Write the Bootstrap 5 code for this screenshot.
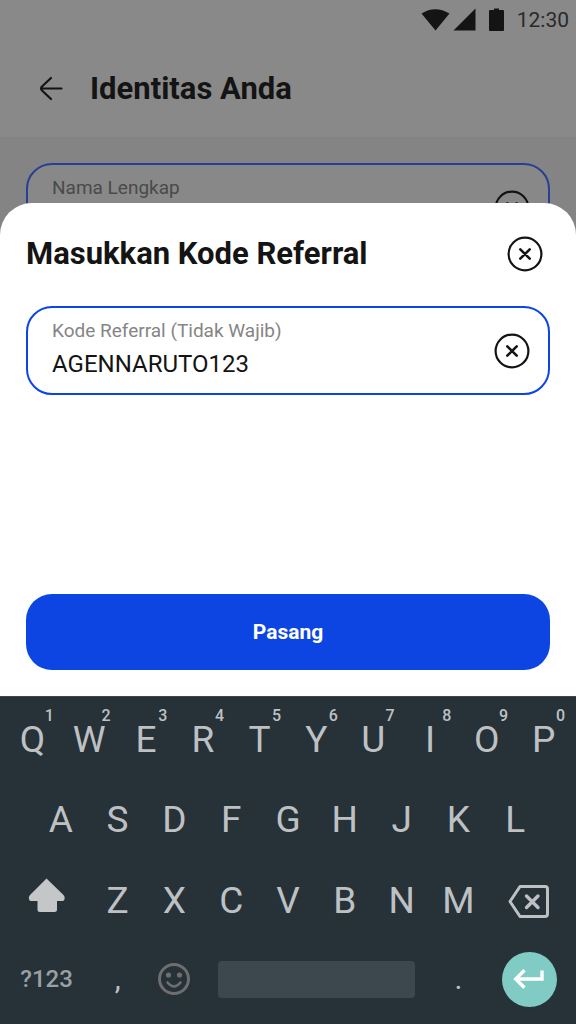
<!DOCTYPE html>
<html lang="id">
<head>
<meta charset="utf-8">
<meta name="viewport" content="width=device-width, initial-scale=1">
<title>Masukkan Kode Referral</title>
<link href="https://cdn.jsdelivr.net/npm/bootstrap@5.3.0/dist/css/bootstrap.min.css" rel="stylesheet">
<style>
  :root { --ink: #141414; --blue: #0d45e3; --key: #bec1c3; }
  body { font-family: Roboto, "Liberation Sans", sans-serif; color: var(--ink); background: #263138; }
  button { color: inherit; }
  svg { display: block; }

  /* Dimmed page behind the sheet */
  .underlay { flex: 1 1 0; min-height: 0; background: #848484; margin-bottom: -32px; }
  .underlay-body { padding: 26px; }
  .top-area { background: #898989; }
  .status-bar { height: 40px; padding-right: 7px; gap: 13px; font-size: 21px; line-height: 40px; color: #2a2a2a; }
  .app-bar { height: 97px; padding-left: 38px; gap: 26px; }
  .title-text { font-size: 31px; line-height: 36px; font-weight: 700; }

  /* Rounded text field with a floating label and a clear button */
  .entry { border: 2px solid var(--blue); border-radius: 26px; padding: 10px 18px 9px 24px; }
  .entry label { font-size: 19px; line-height: 26px; color: #858585; }
  .entry input { font-size: 24px; line-height: 40px; height: 40px; padding: 0; color: var(--ink); outline: 0; }
  .entry-dim { border-color: #284094; background: #888; }
  .entry-dim label { color: #4a4a4a; }
  .plain-btn { border: 0; background: none; padding: 0; }

  .sheet { background: #fff; border-radius: 32px 32px 0 0; padding: 33px 26px 26px; }
  .sheet-head { padding-right: 7px; margin-bottom: 34px; }
  .sheet-gap { height: 199px; }
  .btn-apply { --bs-btn-bg: var(--blue); --bs-btn-color: #fff; --bs-btn-hover-bg: #0b3cc6; --bs-btn-hover-color: #fff;
    border: 0; border-radius: 26px; font-size: 21px; line-height: 28px; font-weight: 700; padding: 24px; }

  /* Keyboard: twenty half-key columns */
  .keyboard { display: grid; grid-template-columns: repeat(20, minmax(0, 1fr)); grid-template-rows: 80px 80px 82px 74px;
    padding: 4px 4px 8px; box-shadow: inset 0 1px #3c474d; background: #263138; color: var(--key); }
  .key { grid-column: span 2; border: 0; background: none; padding: 0; color: inherit; font-size: 37px; line-height: 40px;
    display: flex; align-items: center; justify-content: center; position: relative; }
  .key-wide { grid-column: span 3; }
  .key-first { grid-column: 2 / span 2; }
  .key-space { grid-column: span 8; }
  .key-space span { flex: 1; height: 37px; margin: 0 15px; border-radius: 4px; background: #3d484e; }
  .key-mode { font-size: 24px; font-weight: 500; color: #9aa0a4; }
  .key-point { font-size: 30px; }
  .key sup { position: absolute; top: 8px; right: 7px; font-size: 16px; line-height: 16px; font-weight: 500; }
  .key-enter span { width: 55px; height: 55px; border-radius: 50%; background: #80cbc4;
    display: flex; align-items: center; justify-content: center; }
</style>
</head>
<body>
<div class="d-flex flex-column min-vh-100">

  <div class="underlay overflow-hidden">
    <div class="top-area">
      <div class="status-bar d-flex align-items-center justify-content-end">
        <svg width="55" height="24" viewBox="0 0 55 24" fill="#141414" aria-hidden="true">
          <path d="M.5 5.500Q14 -3 28.500 5.500L14.500 22.500Z"/>
          <path d="M54.500 .5V22.500H32.500Z"/>
        </svg>
        <svg width="15" height="24" viewBox="0 0 15 24" fill="#141414" aria-hidden="true">
          <path d="M5 .5h5v1.500h4a1 1 0 0 1 1 1v19a1 1 0 0 1-1 1H1a1 1 0 0 1-1-1V3a1 1 0 0 1 1-1H5z"/>
        </svg>
        <span>12:30</span>
      </div>
      <div class="app-bar d-flex align-items-center">
        <button class="plain-btn" type="button" aria-label="Kembali">
          <svg width="26" height="26" viewBox="0 0 26 26" fill="none" stroke="#141414" stroke-width="2.200" stroke-linecap="round" stroke-linejoin="round"><path d="M23.500 12.500H3M13 2L4 10.500Q2.200 12.500 4 14.500L13 23"/></svg>
        </button>
        <h1 class="title-text m-0">Identitas Anda</h1>
      </div>
    </div>
    <div class="underlay-body">
      <div class="entry entry-dim d-flex align-items-center">
        <div class="flex-grow-1">
          <label class="d-block" for="fullName">Nama Lengkap</label>
          <input class="form-control-plaintext" id="fullName" type="text">
        </div>
        <button class="plain-btn" type="button" aria-label="Hapus nama">
          <svg width="36" height="36" viewBox="0 0 36 36" fill="none" stroke="#141414" stroke-width="2.200" stroke-linecap="round"><circle cx="18" cy="18" r="16.400"/><path d="M13.300 13.300l9.400 9.400M22.700 13.300l-9.400 9.400" stroke-width="2.600"/></svg>
        </button>
      </div>
    </div>
  </div>

  <main class="sheet position-relative">
    <div class="sheet-head d-flex align-items-center justify-content-between">
      <h2 class="title-text m-0">Masukkan Kode Referral</h2>
      <button class="plain-btn" type="button" aria-label="Tutup">
        <svg width="36" height="36" viewBox="0 0 36 36" fill="none" stroke="#141414" stroke-width="2.200" stroke-linecap="round"><circle cx="18" cy="18" r="16.400"/><path d="M13.300 13.300l9.400 9.400M22.700 13.300l-9.400 9.400" stroke-width="2.600"/></svg>
      </button>
    </div>
    <form>
      <div class="entry d-flex align-items-center">
        <div class="flex-grow-1">
          <label class="d-block" for="referral">Kode Referral (Tidak Wajib)</label>
          <input class="form-control-plaintext" id="referral" type="text" value="AGENNARUTO123">
        </div>
        <button class="plain-btn" type="button" aria-label="Hapus kode">
          <svg width="36" height="36" viewBox="0 0 36 36" fill="none" stroke="#141414" stroke-width="2.200" stroke-linecap="round"><circle cx="18" cy="18" r="16.400"/><path d="M13.300 13.300l9.400 9.400M22.700 13.300l-9.400 9.400" stroke-width="2.600"/></svg>
        </button>
      </div>
      <div class="sheet-gap"></div>
      <button class="btn btn-apply w-100" type="submit">Pasang</button>
    </form>
  </main>

  <div class="keyboard">
    <button class="key" type="button">Q<sup>1</sup></button>
    <button class="key" type="button">W<sup>2</sup></button>
    <button class="key" type="button">E<sup>3</sup></button>
    <button class="key" type="button">R<sup>4</sup></button>
    <button class="key" type="button">T<sup>5</sup></button>
    <button class="key" type="button">Y<sup>6</sup></button>
    <button class="key" type="button">U<sup>7</sup></button>
    <button class="key" type="button">I<sup>8</sup></button>
    <button class="key" type="button">O<sup>9</sup></button>
    <button class="key" type="button">P<sup>0</sup></button>

    <button class="key key-first" type="button">A</button>
    <button class="key" type="button">S</button>
    <button class="key" type="button">D</button>
    <button class="key" type="button">F</button>
    <button class="key" type="button">G</button>
    <button class="key" type="button">H</button>
    <button class="key" type="button">J</button>
    <button class="key" type="button">K</button>
    <button class="key" type="button">L</button>

    <button class="key key-wide" type="button" aria-label="Shift">
      <svg width="38" height="46" viewBox="0 0 38 46" fill="#c4c6c7"><path d="M18.500 .5L35.500 17Q37.500 19 36.500 21.500Q36 23 34 23H29V31.500Q29 34 26.500 34H12Q9.500 34 9.500 31.500V23H3.500Q1.500 23 1 21.500Q0 19 2 17Z"/></svg>
    </button>
    <button class="key" type="button">Z</button>
    <button class="key" type="button">X</button>
    <button class="key" type="button">C</button>
    <button class="key" type="button">V</button>
    <button class="key" type="button">B</button>
    <button class="key" type="button">N</button>
    <button class="key" type="button">M</button>
    <button class="key key-wide" type="button" aria-label="Hapus">
      <svg width="42" height="34" viewBox="0 0 42 34" fill="none" stroke="#bec1c3" stroke-width="3" stroke-linejoin="round"><path d="M12 2.500H37Q39.500 2.500 39.500 5V30Q39.500 32.500 37 32.500H12L2 17.500Z"/><path d="M18.500 12L30 23.500M30 12L18.500 23.500" stroke-width="3.400" stroke-linecap="round"/></svg>
    </button>

    <button class="key key-wide key-mode" type="button">?123</button>
    <button class="key key-point" type="button">,</button>
    <button class="key" type="button" aria-label="Emoji">
      <svg width="32" height="32" viewBox="0 0 32 32"><circle cx="16" cy="16" r="14.500" fill="none" stroke="#6e6e6e" stroke-width="3"/><circle cx="10.500" cy="12" r="2.600" fill="#6e6e6e"/><circle cx="21.500" cy="12" r="2.600" fill="#6e6e6e"/><path d="M9.500 19.500Q16 27.500 22.500 19.500" fill="none" stroke="#6e6e6e" stroke-width="2.600" stroke-linecap="round"/></svg>
    </button>
    <button class="key key-space" type="button" aria-label="Spasi"><span></span></button>
    <button class="key key-point" type="button">.</button>
    <button class="key key-wide key-enter" type="button" aria-label="Enter">
      <span><svg width="32" height="20" viewBox="0 0 32 20" fill="none" stroke="#fff" stroke-width="3.400"><path d="M29 1.500V10H3M11.500 1.200L2.700 10L11.500 18.800"/></svg></span>
    </button>
  </div>
</div>
<script src="https://cdn.jsdelivr.net/npm/bootstrap@5.3.0/dist/js/bootstrap.bundle.min.js"></script>
</body>
</html>
